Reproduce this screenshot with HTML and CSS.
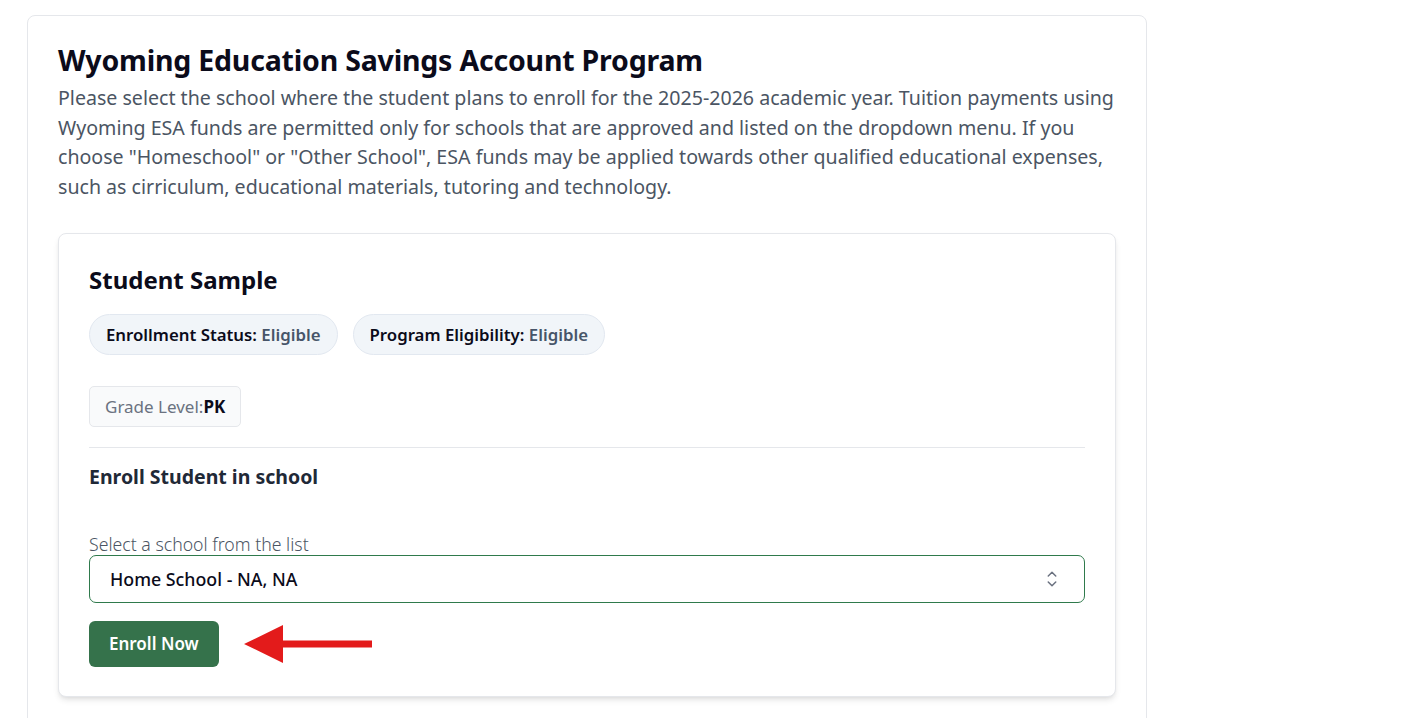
FILE: index.html
```html
<!DOCTYPE html>
<html lang="en">
<head>
<meta charset="utf-8">
<title>Wyoming Education Savings Account Program</title>
<link rel="stylesheet" href="styles.css">
</head>
<body>
<main class="page">
  <section class="outer-card">
    <h1 class="title">Wyoming Education Savings Account Program</h1>
    <p class="intro">Please select the school where the student plans to enroll for the 2025-2026 academic year. Tuition payments using Wyoming ESA funds are permitted only for schools that are approved and listed on the dropdown menu. If you choose "Homeschool" or "Other School", ESA funds may be applied towards other qualified educational expenses, such as cirriculum, educational materials, tutoring and technology.</p>

    <div class="student-card">
      <h2 class="student-name">Student Sample</h2>
      <div class="badges">
        <span class="badge">Enrollment Status: <span class="badge-value">Eligible</span></span>
        <span class="badge">Program Eligibility: <span class="badge-value">Eligible</span></span>
      </div>
      <div class="grade">Grade Level:<strong>PK</strong></div>
      <hr class="divider">
      <h3 class="enroll-title">Enroll Student in school</h3>
      <label class="field-label" for="school">Select a school from the list</label>
      <div class="select-wrap">
        <select id="school" class="select">
          <option>Home School - NA, NA</option>
        </select>
        <svg class="select-icon" viewBox="0 0 24 24" fill="none" stroke="currentColor" stroke-width="1.5" stroke-linecap="round" stroke-linejoin="round" aria-hidden="true">
          <path d="M8.25 15 12 18.75 15.75 15M8.25 9 12 5.25 15.75 9"/>
        </svg>
      </div>
      <div class="actions">
        <button class="btn" type="button">Enroll Now</button>
        <svg class="arrow" viewBox="0 0 128 38" aria-hidden="true">
          <polygon points="0,19 39,0 39,15.5 128,15.5 128,22.5 39,22.5 39,38" fill="#e31b1b"/>
        </svg>
      </div>
    </div>
  </section>
</main>
</body>
</html>
```

FILE: styles.css
```css
* { box-sizing: border-box; }

html, body {
  margin: 0;
  padding: 0;
  background: #ffffff;
  font-family: "Noto Sans", "Open Sans", "Liberation Sans", sans-serif;
  color: #111827;
}

.page {
  padding: 15px 0 0 27px;
}

.outer-card {
  width: 1120px;
  min-height: 720px;
  border: 1px solid #e5e7eb;
  border-radius: 8px;
  padding: 26px 30px 30px 30px;
  background: #fff;
}

.title {
  margin: 0 0 5px 0;
  font-size: 28.5px;
  line-height: 36px;
  font-weight: 700;
  color: #0b0b1a;
  letter-spacing: -0.2px;
}

.intro {
  margin: 0;
  font-size: 19.6px;
  line-height: 29.7px;
  color: #4b5563;
}

.student-card {
  margin-top: 31px;
  border: 1px solid #e5e7eb;
  border-radius: 8px;
  box-shadow: 0 4px 6px -1px rgba(0,0,0,0.10), 0 2px 4px -2px rgba(0,0,0,0.08);
  padding: 30px 30px 29px 30px;
  background: #fff;
}

.student-name {
  margin: 0;
  font-size: 24px;
  line-height: 32px;
  font-weight: 700;
  color: #0b0b1a;
}

.badges {
  display: flex;
  gap: 15px;
  margin-top: 18px;
}

.badge {
  display: inline-block;
  background: #f1f5f9;
  border: 1px solid #e2e8f0;
  border-radius: 9999px;
  padding: 8px 16px;
  font-size: 16.8px;
  line-height: 23px;
  font-weight: 600;
  color: #0b0b1a;
}

.badge-value { color: #475569; }

.grade {
  display: inline-block;
  margin-top: 31px;
  background: #f9fafb;
  border: 1px solid #e5e7eb;
  border-radius: 5px;
  padding: 8px 15px;
  font-size: 17px;
  line-height: 23px;
  color: #6b7280;
}

.grade strong {
  color: #0b0b1a;
  font-weight: 700;
}

.divider {
  margin: 20px 0 0 0;
  border: 0;
  border-top: 1px solid #e5e7eb;
  height: 0;
}

.enroll-title {
  margin: 15px 0 0 0;
  font-size: 19.5px;
  line-height: 28px;
  font-weight: 700;
  color: #1f2937;
}

.field-label {
  display: block;
  margin-top: 42px;
  font-size: 17.7px;
  line-height: 22px;
  font-weight: 300;
  color: #4b5563;
}

.select-wrap {
  position: relative;
}

.select {
  display: block;
  width: 100%;
  height: 48px;
  appearance: none;
  -webkit-appearance: none;
  background: #fff;
  border: 1.5px solid #2f7a4c;
  border-radius: 7px;
  padding: 0 40px 0 20px;
  font-family: inherit;
  font-size: 17.8px;
  font-weight: 500;
  color: #0b0b1a;
}

.select-icon {
  position: absolute;
  right: 21px;
  top: 12px;
  width: 24px;
  height: 24px;
  color: #6b7280;
  pointer-events: none;
}

.actions {
  display: flex;
  align-items: center;
  gap: 25px;
  margin-top: 18px;
}

.btn {
  height: 46px;
  padding: 0 20px;
  background: #35724b;
  color: #fff;
  border: 0;
  border-radius: 6px;
  font-family: inherit;
  font-size: 17px;
  font-weight: 600;
}

.arrow {
  width: 128px;
  height: 38px;
  display: block;
}
```
